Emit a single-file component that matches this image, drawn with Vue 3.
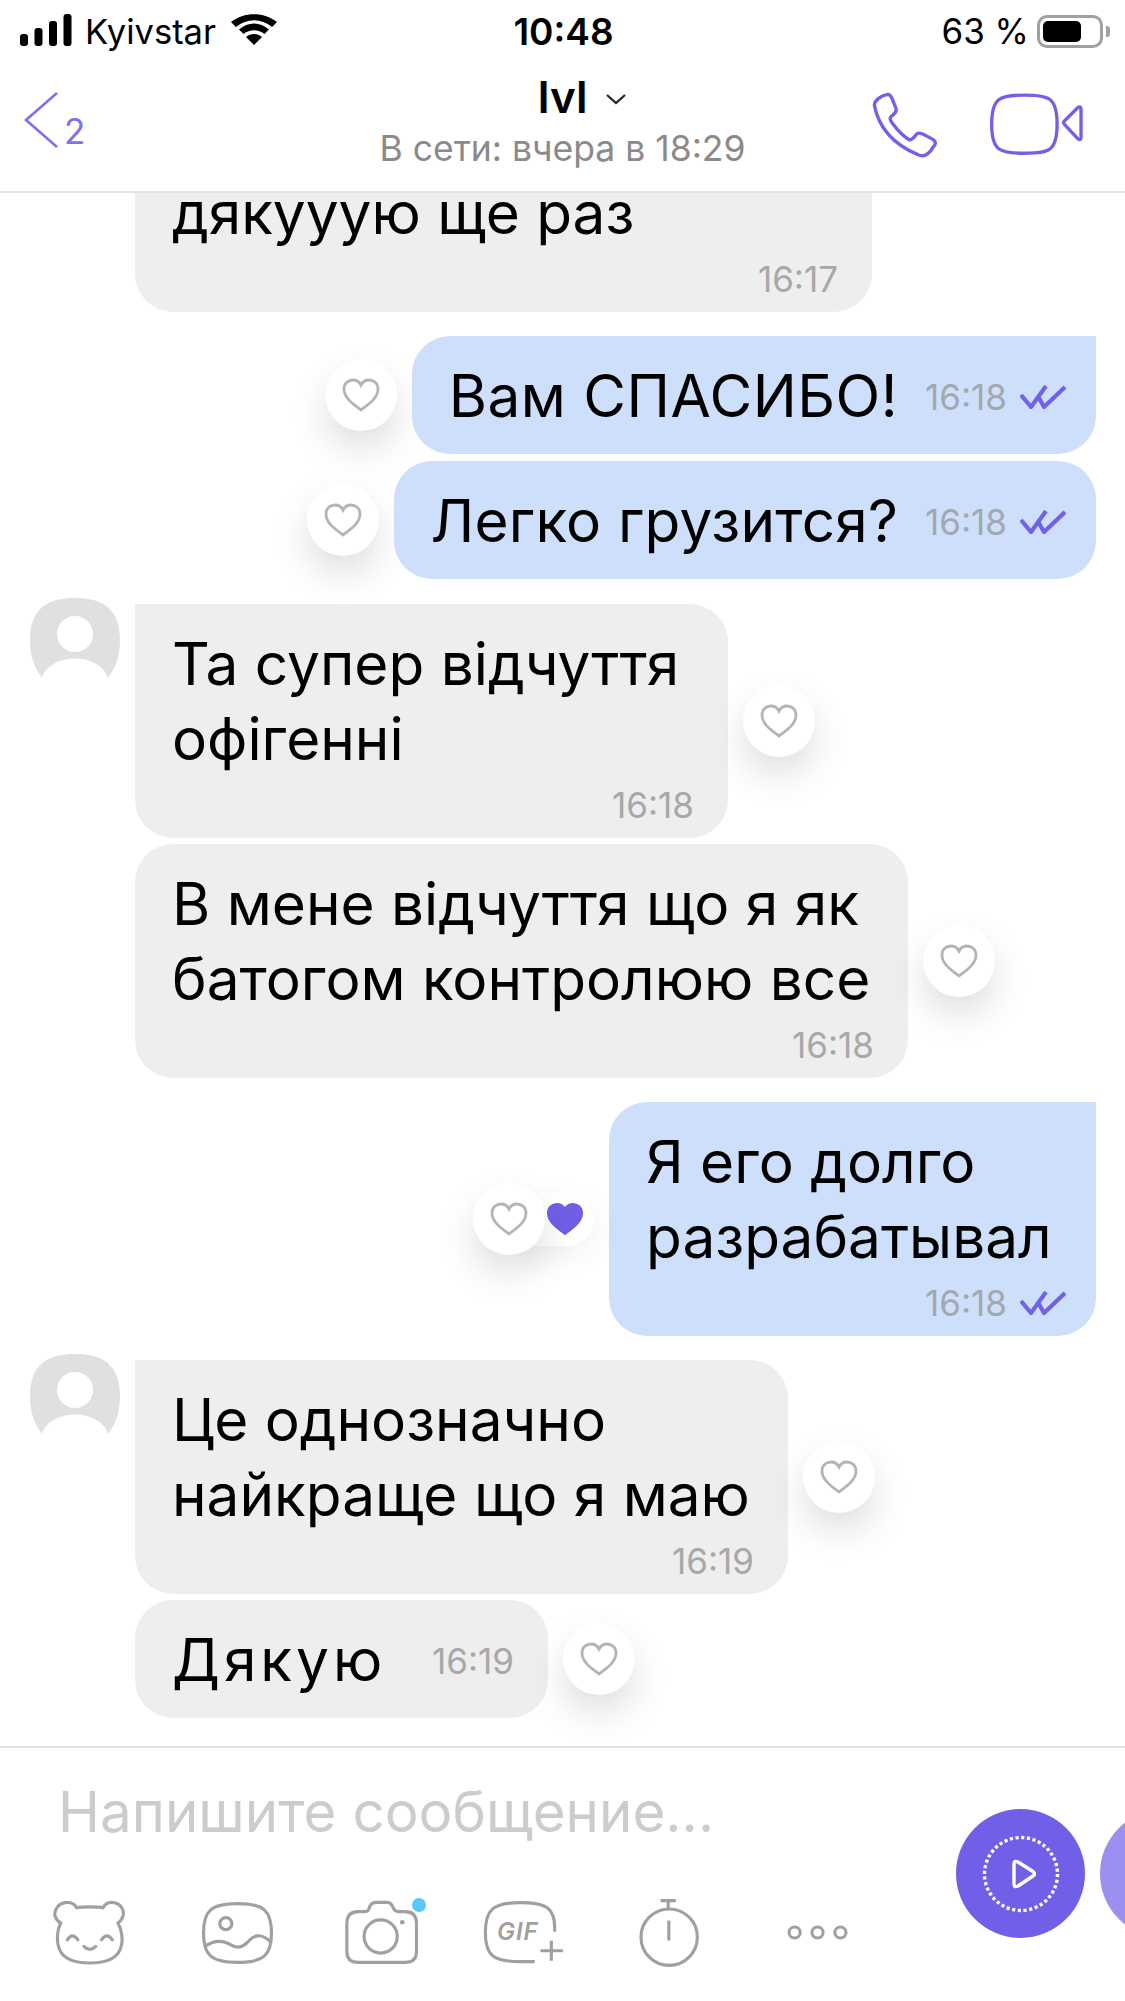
<script setup>
const messages = [
  { id: 1, side: 'in', lines: ['дякууую ще раз'], time: '16:17', width: 737, stacked: true, noHeart: true },
  { id: 2, side: 'out', lines: ['Вам СПАСИБО!'], time: '16:18', gap: 24, first: true, spacing: 0.5 },
  { id: 3, side: 'out', lines: ['Легко грузится?'], time: '16:18', gap: 7, spacing: 0.2 },
  { id: 4, side: 'in', lines: ['Та супер відчуття', 'офігенні'], time: '16:18', width: 593, avatar: true, gap: 25, stacked: true, first: true },
  { id: 5, side: 'in', lines: ['В мене відчуття що я як', 'батогом контролюю все'], time: '16:18', width: 773, gap: 6, stacked: true },
  { id: 6, side: 'out', lines: ['Я его долго', 'разрабатывал'], time: '16:18', width: 487, gap: 24, stacked: true, liked: true, first: true },
  { id: 7, side: 'in', lines: ['Це однозначно', 'найкраще що я маю'], time: '16:19', width: 653, avatar: true, gap: 24, stacked: true, first: true },
  { id: 8, side: 'in', lines: ['Дякую'], time: '16:19', gap: 6, spacing: 4, width: 413 }
]
const heart = 'M20 33 C12 27 3 21 3 12 C3 6 7.500 3 12 3 C15.500 3 18.500 5 20 8 C21.500 5 24.500 3 28 3 C32.500 3 37 6 37 12 C37 21 28 27 20 33 Z'
</script>

<template>
  <div class="phone">
    <header class="top">
      <div class="status">
        <div class="status-left">
          <svg class="signal" width="52" height="32" viewBox="0 0 52 32">
            <rect x="0" y="20" width="8" height="12" rx="3" />
            <rect x="14.500" y="14" width="8" height="18" rx="3" />
            <rect x="29" y="7" width="8" height="25" rx="3" />
            <rect x="43.500" y="0" width="8" height="32" rx="3" />
          </svg>
          <span class="carrier">Kyivstar</span>
          <svg class="wifi" width="46" height="31" viewBox="0 0 46 31">
            <path d="M23 31 L15 23 C19.500 19 26.500 19 31 23 Z" />
            <path d="M8 15.500 C17 7.500 29 7.500 38 15.500 L33.500 20 C27 15 19 15 12.500 20 Z" />
            <path d="M0 8 C13 -2.500 33 -2.500 46 8 L41 13 C30 4 16 4 5 13 Z" />
          </svg>
        </div>
        <div class="clock">10:48</div>
        <div class="status-right">
          <span class="battery-text">63 %</span>
          <span class="battery"><i></i></span>
          <span class="battery-tip"></span>
        </div>
      </div>
      <div class="nav">
        <div class="back">
          <svg width="36" height="58" viewBox="0 0 36 58"><path d="M34 2 L3 29 L34 56" fill="none" stroke="#7f6ff0" stroke-width="2.600" /></svg>
          <span class="back-count">2</span>
        </div>
        <div class="title">
          <div class="name">
            <span class="name-text">Ivl<svg width="22" height="12" viewBox="0 0 22 12"><path d="M2 2 L11 10 L20 2" fill="none" stroke="#222" stroke-width="2.200" /></svg></span>
          </div>
          <div class="seen">В сети: вчера в 18:29</div>
        </div>
        <div class="nav-actions">
          <svg width="67" height="67" viewBox="35 35 200 200" fill="none" stroke="#7360e8" stroke-width="10" stroke-linejoin="round" stroke-linecap="round">
            <path d="M45 75 C45 60 65 45 85 42 C92 42 95 48 98 55 L110 85 C112 95 105 100 95 108 C90 112 92 120 100 130 C115 150 135 170 150 178 C158 178 162 172 170 162 C175 155 185 158 195 163 L222 178 C230 185 228 192 220 200 C205 225 190 230 175 222 C110 195 60 150 45 75 Z" />
          </svg>
          <svg width="97" height="65" viewBox="385 38 292 195" fill="none" stroke="#7360e8" stroke-width="10" stroke-linejoin="round">
            <path d="M495 47 C570 47 593 55 593 135 C593 215 570 222 495 222 C420 222 396 215 396 135 C396 55 420 47 495 47 Z" />
            <path d="M665 90 V175 Q665 185 655 178 L615 135 Q610 130 615 125 L655 85 Q665 78 665 90 Z" />
          </svg>
        </div>
      </div>
    </header>

    <main class="chat">
      <div
        v-for="m in messages"
        :key="m.id"
        class="row"
        :class="m.side"
        :style="{ marginTop: (m.gap || 0) + 'px' }"
      >
        <div v-if="m.side === 'in'" class="avatar-slot">
          <svg v-if="m.avatar" class="avatar" width="90" height="90" viewBox="0 0 90 90">
            <path d="M45 0 C72 0 90 10 90 42 C90 58 86 69 78 80 C70 54 20 54 12 80 C4 69 0 58 0 42 C0 10 18 0 45 0 Z" fill="#e0e0e0" />
            <circle cx="45" cy="36" r="18" fill="#fff" />
          </svg>
        </div>
        <div
          v-if="m.side === 'out' && !m.liked"
          class="like"
        >
          <svg width="40" height="36" viewBox="0 0 40 36"><path :d="heart" fill="none" stroke="#b4b4b4" stroke-width="2.800" /></svg>
        </div>
        <div v-if="m.liked" class="like-group">
          <div class="like like-front">
            <svg width="40" height="36" viewBox="0 0 40 36"><path :d="heart" fill="none" stroke="#b4b4b4" stroke-width="2.800" /></svg>
          </div>
          <div class="liked-pill">
            <svg width="40" height="36" viewBox="0 0 40 36"><path :d="heart" fill="#6f5fe6" stroke="#6f5fe6" stroke-width="2" /></svg>
          </div>
        </div>
        <div class="bubble" :class="{ stacked: m.stacked, first: m.first }" :style="m.width ? { width: m.width + 'px' } : null">
          <div class="text" :style="m.spacing ? { letterSpacing: m.spacing + 'px' } : null">
            <div v-for="line in m.lines" :key="line">{{ line }}</div>
          </div>
          <div class="meta">
            <span class="time">{{ m.time }}</span>
            <svg v-if="m.side === 'out'" class="ticks" width="46" height="24" viewBox="0 0 46 24" fill="none" stroke="#7360e8" stroke-width="4.200" stroke-linejoin="round">
              <path d="M1 10 L11 22 L26 1" />
              <path d="M19 13 L24 22 L45 2" />
            </svg>
          </div>
        </div>
        <div v-if="m.side === 'in' && !m.noHeart" class="like">
          <svg width="40" height="36" viewBox="0 0 40 36"><path :d="heart" fill="none" stroke="#b4b4b4" stroke-width="2.800" /></svg>
        </div>
      </div>
    </main>

    <footer class="composer">
      <div class="composer-main">
        <div class="placeholder">Напишите сообщение...</div>
        <div class="tools">
          <svg width="73" height="65" viewBox="40 32 218 196" fill="none" stroke="#a0a0a0" stroke-width="9.500" stroke-linecap="round">
            <path d="M110 55 C125 52 175 52 190 55 C197 42 210 38 222 40 C242 43 255 62 250 80 C247 92 240 98 235 102 C246 120 250 150 245 170 C238 205 205 222 150 222 C95 222 62 205 55 170 C50 150 52 120 62 102 C55 98 48 90 45 80 C42 62 55 43 75 40 C90 38 103 42 110 55 Z" />
            <path d="M82 152 Q97 128 114 152 M185 152 Q202 128 218 152 M132 172 Q150 190 168 172" />
          </svg>
          <svg class="tool-photo" width="75" height="64" viewBox="480 32 224 192" fill="none" stroke="#a0a0a0" stroke-width="9.500">
            <path d="M592 40 C670 40 694 60 694 128 C694 196 670 216 592 216 C514 216 490 196 490 128 C490 60 514 40 592 40 Z" />
            <circle cx="557" cy="100" r="18" />
            <path d="M492 170 C520 150 545 150 565 160 C585 172 600 176 620 158 C640 135 660 125 692 155" />
          </svg>
          <span class="tool-camera">
            <svg width="76" height="65" viewBox="912 30 228 196" fill="none" stroke="#a0a0a0" stroke-width="9.500">
              <path d="M955 65 H975 C985 65 985 60 990 48 C993 40 1000 37 1010 37 H1040 C1050 37 1055 42 1058 50 C1062 60 1065 65 1075 65 H1095 C1118 65 1130 78 1130 100 V185 C1130 208 1118 218 1095 218 H955 C932 218 920 208 920 185 V100 C920 78 932 65 955 65 Z" />
              <circle cx="1022" cy="140" r="50" />
              <circle cx="1087" cy="97" r="7" fill="#a0a0a0" stroke="none" />
            </svg>
            <span class="camera-dot"></span>
          </span>
          <span class="tool-gif">
            <svg width="83" height="65" viewBox="36 32 250 196" fill="none" stroke="#a0a0a0" stroke-width="9.500">
              <path d="M255 128 V115 C255 60 235 40 150 40 C70 40 46 60 46 130 C46 200 70 218 150 218 H195" />
              <path d="M245 155 V215 M212 185 H280" />
            </svg>
            <span class="gif-label">GIF</span>
          </span>
          <svg class="tool-timer" width="63" height="71" viewBox="504 20 190 212" fill="none" stroke="#a0a0a0" stroke-width="9.500">
            <path d="M572 30 H618 M595 30 V52" />
            <circle cx="598" cy="140" r="85" />
            <path d="M597 90 V150" />
          </svg>
          <svg class="tool-more" width="67" height="17" viewBox="945 105 200 52" fill="none" stroke="#a0a0a0" stroke-width="9.500">
            <circle cx="972" cy="131" r="17" />
            <circle cx="1042" cy="131" r="17" />
            <circle cx="1112" cy="131" r="17" />
          </svg>
        </div>
      </div>
      <div class="send-main">
        <svg width="80" height="80" viewBox="0 0 80 80" fill="none" stroke="#fff">
          <circle cx="40" cy="40" r="36.500" stroke-width="3.400" stroke-dasharray="3.200 2.530" />
          <path d="M33 30 Q33 26 37 28 L52 37.500 Q55 40 52 42 L37 52 Q33 54 33 50 Z" stroke-width="3.400" stroke-linejoin="round" />
        </svg>
      </div>
      <div class="send-second"></div>
    </footer>
  </div>
</template>

<style>
html, body { margin: 0; background: #fff; }
</style>

<style scoped>
.phone {
  width: 1125px;
  height: 2001px;
  display: flex;
  flex-direction: column;
  overflow: hidden;
  background: #fff;
  font-family: Inter, "Noto Sans", "Liberation Sans", sans-serif;
  color: #000;
}
.top { height: 193px; flex: none; border-bottom: 2px solid #e2e2e2; box-sizing: border-box; position: relative; z-index: 1; background: #fff; }
.status {
  height: 62px;
  display: grid;
  grid-template-columns: 1fr auto 1fr;
  align-items: center;
  padding: 0 15px 0 20px;
}
.status-left { display: flex; align-items: center; }
.signal { fill: #000; margin-top: -2px; }
.carrier { font-size: 34.500px; margin-left: 13px; letter-spacing: 0; }
.wifi { fill: #000; margin-left: 15px; margin-top: -3px; }
.clock { font-size: 37px; font-weight: 600; margin-left: -3px; }
.status-right { display: flex; align-items: center; justify-content: flex-end; }
.battery-text { font-size: 35px; margin-right: 8px; }
.battery {
  width: 66px;
  height: 33px;
  border: 3px solid #a0a0a0;
  border-radius: 10px;
  padding: 3px;
  box-sizing: border-box;
  display: block;
}
.battery i { display: block; width: 38px; height: 100%; background: #000; border-radius: 5px; }
.battery-tip { width: 4px; height: 11px; background: #a0a0a0; border-radius: 0 3px 3px 0; margin-left: 3px; }
.nav {
  height: 129px;
  display: grid;
  grid-template-columns: 1fr auto 1fr;
  align-items: start;
}
.back { display: flex; align-items: flex-end; padding: 29px 0 0 23px; }
.back-count { font-size: 35px; color: #7f6ff0; margin-left: 5px; line-height: 35px; }
.title { text-align: center; padding-top: 10px; }
.name { font-size: 44px; font-weight: 600; line-height: 50px; }
.name-text { position: relative; display: inline-block; }
.name-text svg { position: absolute; left: calc(100% + 17px); top: 21px; }
.seen { font-size: 35.500px; color: #8a8a8a; line-height: 42px; margin-top: 6px; }
.nav-actions { display: flex; justify-content: flex-end; align-items: flex-start; padding: 30px 40px 0 0; gap: 50px; }

.chat {
  flex: 1;
  min-height: 0;
  display: flex;
  flex-direction: column;
  justify-content: flex-end;
  overflow: hidden;
  padding-bottom: 28px;
}
.row { display: flex; align-items: center; flex: none; position: relative; }
.row.out { justify-content: flex-end; padding-right: 29px; }
.row.in { padding-left: 30px; }
.avatar-slot { width: 105px; flex: none; align-self: flex-start; margin-top: -6px; }
.avatar { display: block; }
.bubble {
  display: flex;
  align-items: center;
  justify-content: space-between;
  min-height: 118px;
  box-sizing: border-box;
  padding: 0 30px 0 37px;
  border-radius: 38px;
}
.in .bubble { background: #eeeeee; padding-right: 34px; }
.out .bubble { background: #cddffa; }
.in .bubble.first { border-top-left-radius: 0; }
.out .bubble.first { border-top-right-radius: 0; }
.bubble.stacked { display: block; padding-top: 22px; padding-bottom: 14px; }
.text { font-size: 58.500px; line-height: 75px; white-space: nowrap; color: #000; }
.meta { display: flex; align-items: center; margin: 3px 0 0 27px; }
.stacked .meta { justify-content: flex-end; margin: 10px 0 0; height: 38px; }
.time { font-size: 35px; color: #a3a8ad; line-height: 38px; }
.in .time { color: #a8a8a8; }
.ticks { margin-left: 13px; }
.like {
  width: 72px;
  height: 72px;
  flex: none;
  border-radius: 50%;
  background: #fff;
  box-shadow: 0 18px 36px rgba(0, 0, 0, 0.13);
  display: flex;
  align-items: center;
  justify-content: center;
}
.out .like { margin-right: 15px; }
.in .like { margin-left: 15px; }
.like-group { display: flex; align-items: center; margin-right: 15px; position: relative; }
.out .like.like-front { margin-right: 0; position: relative; z-index: 1; }
.liked-pill {
  width: 70px;
  height: 54px;
  margin-left: -21px;
  padding-left: 21px;
  box-sizing: border-box;
  border-radius: 0 27px 27px 0;
  background: #fff;
  box-shadow: 0 10px 30px rgba(0, 0, 0, 0.06);
  display: flex;
  align-items: center;
}

.composer {
  height: 255px;
  flex: none;
  border-top: 2px solid #e2e2e2;
  box-sizing: border-box;
  display: flex;
  overflow: hidden;
}
.composer-main { width: 956px; flex: none; }
.placeholder { font-size: 56.500px; line-height: 60px; color: #cccccc; padding: 34px 0 0 58px; white-space: nowrap; }
.tools { display: flex; align-items: center; height: 71px; padding: 55px 0 0 53px; }
.tool-photo { margin-left: 74px; }
.tool-camera { position: relative; margin-left: 69px; display: block; height: 65px; }
.tool-camera svg { display: block; }
.camera-dot { position: absolute; left: 68px; top: -2px; width: 14px; height: 14px; border-radius: 50%; background: #5ac8fa; }
.tool-gif { position: relative; margin-left: 62px; display: block; height: 65px; }
.tool-gif svg { display: block; }
.gif-label {
  position: absolute;
  left: 15px;
  top: 16px;
  font-size: 24px;
  font-weight: 600;
  font-style: italic;
  letter-spacing: 1px;
  color: #a0a0a0;
  line-height: 32px;
}
.tool-timer { margin-left: 73px; }
.tool-more { margin-left: 84px; }
.send-main {
  width: 129px;
  height: 129px;
  flex: none;
  margin-top: 61px;
  border-radius: 50%;
  background: #7060e8;
  display: flex;
  align-items: center;
  justify-content: center;
}
.send-second {
  width: 129px;
  height: 129px;
  flex: none;
  margin: 61px 0 0 15px;
  border-radius: 50%;
  background: #9b8fef;
}
</style>
